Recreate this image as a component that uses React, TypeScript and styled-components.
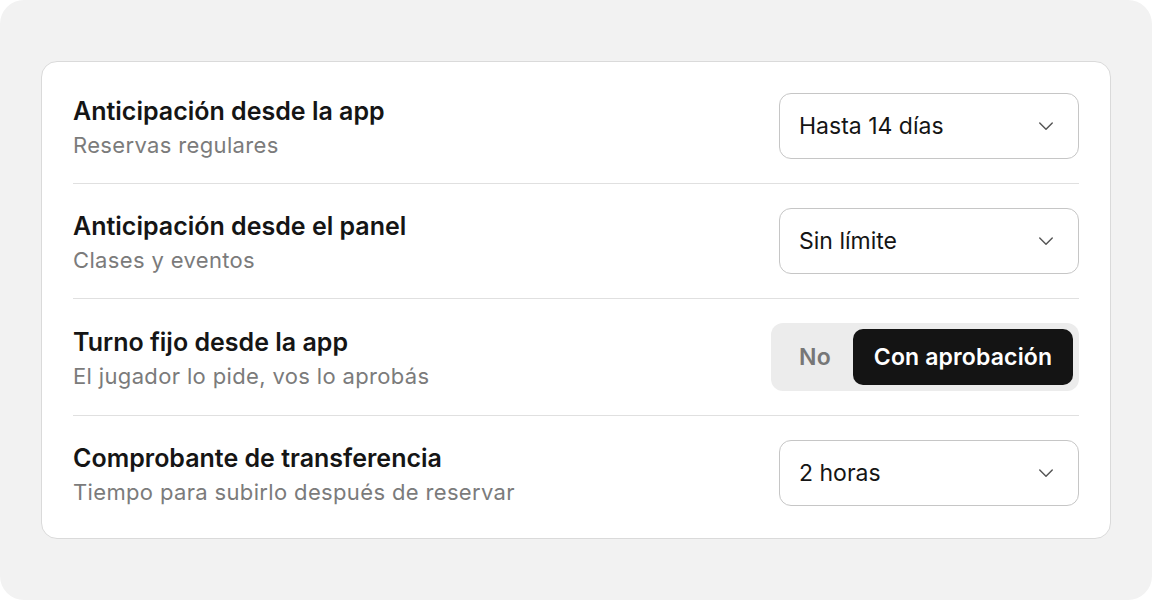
import React from "react";
import styled, { createGlobalStyle } from "styled-components";

const GlobalStyle = createGlobalStyle`
  html, body {
    margin: 0;
    padding: 0;
    background: #ffffff;
  }
  body {
    font-family: Inter, "Noto Sans", "Liberation Sans", sans-serif;
    -webkit-font-smoothing: antialiased;
  }
`;

const Frame = styled.div`
  width: 1152px;
  height: 600px;
  box-sizing: border-box;
  background: #f2f2f2;
  border-radius: 24px;
  padding: 61px 41px;
`;

const Card = styled.div`
  background: #ffffff;
  border: 1.5px solid #dadada;
  border-radius: 16px;
  padding: 7px 31px;
  box-sizing: border-box;
  height: 478px;
`;

const Row = styled.div`
  display: flex;
  align-items: center;
  justify-content: space-between;
  padding: 24px 0;
  border-bottom: 1.5px solid #e0e0e0;

  &:last-child {
    border-bottom: none;
  }
`;

const Labels = styled.div`
  display: flex;
  flex-direction: column;
  gap: 6px;
  padding-top: 4px;
`;

const Title = styled.div`
  font-size: 25px;
  line-height: 28px;
  font-weight: 600;
  color: #151515;
  letter-spacing: 0px;
`;

const Subtitle = styled.div`
  font-size: 22px;
  line-height: 28px;
  color: #7b7b7b;
  letter-spacing: 0.35px;
`;

const Select = styled.div`
  width: 300px;
  height: 66px;
  box-sizing: border-box;
  border: 1.5px solid #c6c6c6;
  border-radius: 12px;
  display: flex;
  align-items: center;
  justify-content: space-between;
  padding: 0 22px 0 19px;
  font-size: 23px;
  color: #151515;
`;

const Segmented = styled.div`
  width: 308px;
  height: 68px;
  box-sizing: border-box;
  background: #ececec;
  border-radius: 12px;
  padding: 6px;
  display: flex;
`;

const Segment = styled.div<{ $active?: boolean }>`
  flex: ${(p) => (p.$active ? "0 0 220px" : "1")};
  display: flex;
  align-items: center;
  justify-content: center;
  border-radius: 10px;
  font-size: 23px;
  font-weight: 600;
  letter-spacing: 0.15px;
  background: ${(p) => (p.$active ? "#141414" : "transparent")};
  color: ${(p) => (p.$active ? "#ffffff" : "#777777")};
`;

const Chevron = () => (
  <svg width="20" height="20" viewBox="0 0 24 24" fill="none" stroke="#555" strokeWidth="1.7" strokeLinecap="round" strokeLinejoin="round">
    <path d="M4.5 8.5l7.5 7.5 7.5-7.5" />
  </svg>
);

const rows = [
  { title: "Anticipación desde la app", sub: "Reservas regulares", value: "Hasta 14 días" },
  { title: "Anticipación desde el panel", sub: "Clases y eventos", value: "Sin límite" },
  { title: "Turno fijo desde la app", sub: "El jugador lo pide, vos lo aprobás", toggle: true },
  { title: "Comprobante de transferencia", sub: "Tiempo para subirlo después de reservar", value: "2 horas" },
];

export default function App() {
  return (
    <>
      <GlobalStyle />
      <Frame>
        <Card>
          {rows.map((r) => (
            <Row key={r.title}>
              <Labels>
                <Title>{r.title}</Title>
                <Subtitle>{r.sub}</Subtitle>
              </Labels>
              {r.toggle ? (
                <Segmented>
                  <Segment>No</Segment>
                  <Segment $active>Con aprobación</Segment>
                </Segmented>
              ) : (
                <Select>
                  <span>{r.value}</span>
                  <Chevron />
                </Select>
              )}
            </Row>
          ))}
        </Card>
      </Frame>
    </>
  );
}
